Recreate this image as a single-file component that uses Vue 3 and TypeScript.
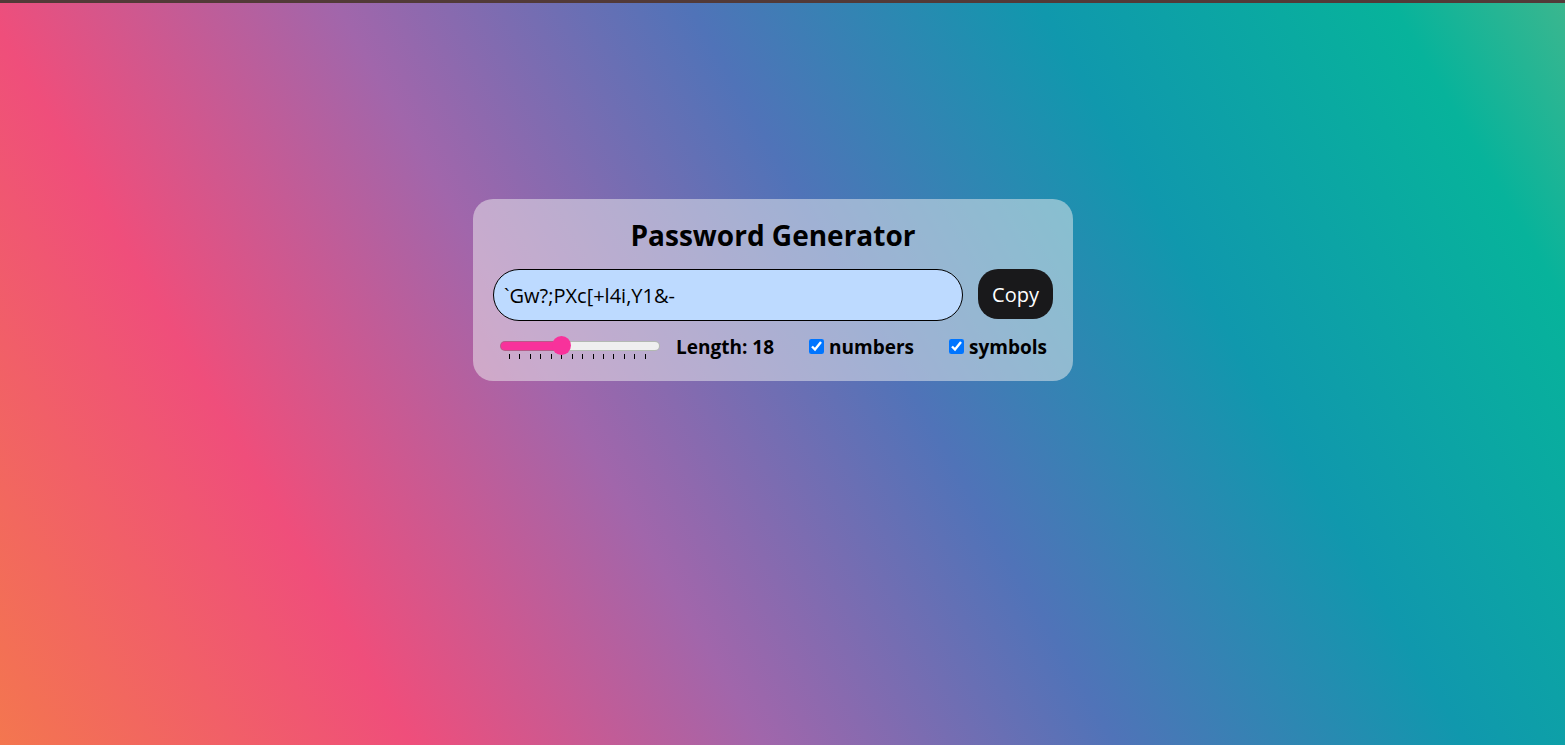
<script setup lang="ts">
import { computed, ref } from 'vue'

const MIN = 8
const MAX = 35
const STEP = 2
const THUMB = 19
const SLIDER = 160

const length = ref(18)
const numbers = ref(true)
const symbols = ref(true)
const password = ref('`Gw?;PXc[+l4i,Y1&-')

const ticks = computed<number[]>(() => {
  const travel = SLIDER - THUMB
  const result: number[] = []
  for (let v = MIN; v <= MAX; v += STEP) {
    result.push(Math.floor(THUMB / 2 + (travel * (v - MIN)) / (MAX - MIN)))
  }
  return result
})

const fill = computed(() => {
  const ratio = (length.value - MIN) / (MAX - MIN)
  return `${THUMB / 2 + (SLIDER - THUMB) * ratio}px`
})

function generate(): void {
  let chars = 'ABCDEFGHIJKLMNOPQRSTUVWXYZabcdefghijklmnopqrstuvwxyz'
  if (numbers.value) chars += '0123456789'
  if (symbols.value) chars += '!@#$%^&*()-_=+[]{};:,.?`~'
  let next = ''
  for (let i = 0; i < length.value; i++) {
    next += chars[Math.floor(Math.random() * chars.length)]
  }
  password.value = next
}

function copy(): void {
  void navigator.clipboard?.writeText(password.value)
}
</script>

<template>
  <main class="page">
    <section class="card">
      <h1 class="title">Password Generator</h1>
      <div class="output">
        <input v-model="password" class="password" type="text" readonly aria-label="Password" />
        <button class="copy" type="button" @click="copy">Copy</button>
      </div>
      <div class="options">
        <div class="length">
          <div class="slider">
            <input
              id="length"
              v-model.number="length"
              class="range"
              type="range"
              :min="MIN"
              :max="MAX"
              :style="{ '--fill': fill }"
              @input="generate"
            />
            <svg class="ticks" :width="SLIDER" height="5" aria-hidden="true">
              <rect v-for="x in ticks" :key="x" :x="x" y="0" width="1" height="5" />
            </svg>
          </div>
          <label for="length">Length: {{ length }}</label>
        </div>
        <div class="option">
          <input id="numbers" v-model="numbers" class="check" type="checkbox" @change="generate" />
          <label for="numbers">numbers</label>
        </div>
        <div class="option">
          <input id="symbols" v-model="symbols" class="check" type="checkbox" @change="generate" />
          <label for="symbols">symbols</label>
        </div>
      </div>
    </section>
  </main>
</template>

<style>
body {
  margin: 0;
}
</style>

<style scoped>
.page {
  box-sizing: border-box;
  min-height: 100vh;
  padding: 196px 19px 20px 0;
  border-top: 3px solid #523a38;
  background: linear-gradient(
    60deg,
    #f79533 -14.6%,
    #f37055 3%,
    #ef4e7b 20.7%,
    #a166ab 38.3%,
    #5073b8 56%,
    #1098ad 73.6%,
    #07b39b 91.3%,
    #6fba82 108.9%
  );
  font-family: 'Segoe UI', 'Open Sans', 'Noto Sans', sans-serif;
  color: #000;
}

.card {
  box-sizing: border-box;
  width: 100%;
  max-width: 600px;
  margin: 0 auto;
  padding: 16px 20px 20px;
  border-radius: 20px;
  background: rgba(240, 240, 240, 0.5);
}

.title {
  margin: 0 0 14px;
  font-size: 28px;
  line-height: 40px;
  font-weight: 700;
  text-align: center;
}

.output {
  display: flex;
  align-items: flex-start;
  gap: 15px;
}

.password {
  box-sizing: border-box;
  flex: 1;
  min-width: 0;
  height: 52px;
  padding: 0 10px;
  border: 1px solid #000;
  border-radius: 30px;
  outline: none;
  background: #bddaff;
  color: #000;
  font-family: inherit;
  font-size: 20px;
}

.copy {
  width: 75px;
  height: 50px;
  padding: 0;
  border: none;
  border-radius: 20px;
  background: #19191b;
  color: #fff;
  font-family: inherit;
  font-size: 20px;
  cursor: pointer;
}

.options {
  display: flex;
  align-items: center;
  justify-content: space-between;
  margin-top: 12px;
  padding: 0 6px 0 7px;
  font-size: 19px;
  line-height: 28px;
  font-weight: 700;
}

.length {
  display: flex;
  align-items: center;
  gap: 16px;
}

.slider {
  display: flex;
  flex-direction: column;
}

.range {
  position: relative;
  z-index: 1;
  width: 160px;
  height: 20px;
  margin: 0;
  background: transparent;
  appearance: none;
}

.range::-webkit-slider-runnable-track {
  box-sizing: border-box;
  height: 10px;
  border: 1px solid rgba(120, 130, 120, 0.5);
  border-radius: 5px;
  background: linear-gradient(to right, #f8329b var(--fill), #efefef var(--fill)) border-box;
}

.range::-webkit-slider-thumb {
  width: 19px;
  height: 19px;
  margin-top: -6px;
  border-radius: 50%;
  background: #f8329b;
  appearance: none;
}

.ticks {
  display: block;
  margin-top: -2px;
}

.option {
  display: flex;
  align-items: center;
  gap: 5px;
}

.check {
  width: 15px;
  height: 15px;
  margin: 0 0 2px;
  accent-color: #0075ff;
}
</style>
